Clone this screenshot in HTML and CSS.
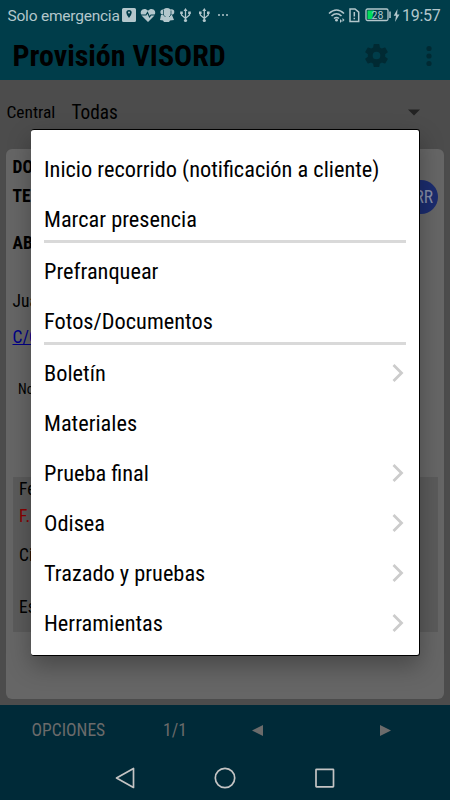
FILE: index.html
```html
<!DOCTYPE html>
<html lang="es">
<head>
<meta charset="utf-8">
<title>Provisión VISORD</title>
<link rel="stylesheet" href="styles.css">
</head>
<body>
<div class="screen">
  <header class="top">
    <div class="status">
      <span class="carrier">Solo emergencia</span>
      <svg class="status-icons" width="112" height="20" viewBox="0 0 112 20" fill="#b3c7cc">
        <path fill-rule="evenodd" d="M3.5 3h11q1.500 0 1.500 1.500v11q0 1.500-1.500 1.500h-11q-1.500 0-1.500-1.500v-11q0-1.500 1.500-1.500zM9 5a2.700 2.700 0 0 0-2.700 2.700q0 1.800 2.700 5.300q2.700-3.500 2.700-5.300A2.700 2.700 0 0 0 9 5z"/><circle cx="9" cy="7.500" r="1"/>
        <path d="M28 17l-6-6C18 5.500 24.500 1.500 28 5.800C31.500 1.500 38 5.500 34 11z"/><path d="M21 10h5l1.500-2.500 2 4.500 1.500-2h4" fill="none" stroke="#003d4a" stroke-width="1.100"/>
        <circle cx="43" cy="7" r="2.600"/><circle cx="51.500" cy="7" r="2.800"/><circle cx="47" cy="7" r="4"/><path d="M40 15l1-5h11l2 5-4 .5-1 1.500h-5l-1-1.500z"/><path d="M43.500 5v5l2 2M51 5.500v4.500l-2 2" fill="none" stroke="#003d4a" stroke-width=".7"/>
        <g id="usb"><path d="M65.500 5v11M61.500 7.500V10l4 3.500L69.500 10V7.500" fill="none" stroke="#b3c7cc" stroke-width="1.300"/><path d="M63.500 6l2-3 2 3zM60.200 6.500h2.600v2.500h-2.600zM68.200 6.500h2.600v2.500h-2.600z"/><circle cx="65.500" cy="15.500" r="1.600"/></g>
        <use href="#usb" x="18.800"/>
        <circle cx="99" cy="10" r="1"/><circle cx="103" cy="10" r="1"/><circle cx="107" cy="10" r="1"/>
      </svg>
      <svg class="signal" width="76" height="20" viewBox="0 0 76 20" fill="none" stroke="#b3c7cc">
        <path d="M1 8.500q7.500-7 15 0M3.500 11q5-4.500 10 0M6 13.500q2.500-2 5 0" stroke-width="1.600"/><circle cx="8.500" cy="15.200" r="1.400" fill="#b3c7cc" stroke="none"/><path d="M12 14v4l2-2zM14.500 13v4l2-2z" fill="#b3c7cc" stroke="none"/>
        <path d="M22 4h5l3.700 3.200V16.500H22z" stroke-width="1.500"/><path d="M26.300 7v4.500M26.300 12.700v1.600" stroke-width="1.500"/>
        <rect x="38" y="4" width="22" height="11.500" rx="1.500" stroke-width="1.300"/><path d="M39.500 5.500H46l-2 8.500h-4.500z" fill="#00dc5a" stroke="none"/><path d="M62 6.500v6.500" stroke-width="1.500"/>
        <text class="battery" x="43.500" y="13.800">28</text>
        <path d="M69.500 4l-3.800 6.800h2.300L67 17l4.500-7.500h-2.400z" fill="#b3c7cc" stroke="none"/>
      </svg>
      <span class="clock">19:57</span>
    </div>
    <div class="appbar">
      <h1 class="title">Provisión VISORD</h1>
      <svg class="gear" width="29" height="29" viewBox="0 0 24 24"><path fill="#002a33" d="M19.140 12.940c.04-.3.06-.61.06-.94 0-.32-.02-.64-.07-.94l2.030-1.580c.18-.14.23-.41.12-.61l-1.920-3.320c-.12-.22-.37-.29-.59-.22l-2.390.96c-.5-.38-1.030-.7-1.620-.94l-.36-2.540c-.04-.24-.24-.41-.48-.41h-3.840c-.24 0-.43.17-.47.41l-.36 2.540c-.59.24-1.130.57-1.620.94l-2.390-.96c-.22-.08-.47 0-.59.22L2.740 8.870c-.12.21-.08.47.12.61l2.030 1.580c-.05.3-.09.63-.09.94s.02.64.07.94l-2.030 1.580c-.18.14-.23.41-.12.61l1.920 3.320c.12.22.37.29.59.22l2.390-.96c.5.38 1.030.7 1.620.94l.36 2.540c.05.24.24.41.48.41h3.840c.24 0 .44-.17.47-.41l.36-2.540c.59-.24 1.130-.56 1.620-.94l2.390.96c.22.08.47 0 .59-.22l1.920-3.320c.12-.22.07-.47-.12-.61zM12 15.200a3.200 3.200 0 1 1 0-6.400 3.200 3.200 0 0 1 0 6.400z"/></svg>
      <svg class="more" width="6" height="22" viewBox="0 0 6 22" fill="#002a33"><circle cx="3" cy="3.500" r="2.600"/><circle cx="3" cy="11" r="2.600"/><circle cx="3" cy="18.500" r="2.600"/></svg>
    </div>
  </header>
  <main class="content">
    <div class="filter">
      <span class="filter-label">Central</span>
      <span class="filter-value">Todas</span>
      <svg class="caret" width="12" height="7" viewBox="0 0 12 7"><path d="M0 .5h12L6 6.500z" fill="#222"/></svg>
    </div>
    <section class="card">
      <div class="line bold">DO</div>
      <div class="line bold with-badge"><span>TE</span><span class="badge">RR</span></div>
      <div class="line bold ab">AB</div>
      <div class="line name">Jua</div>
      <div class="line address"><a class="link">C/C</a></div>
      <div class="line note">No</div>
      <div class="panel">
        <div class="line fe">Fe</div>
        <div class="line red">F.</div>
        <div class="line ci">Ci</div>
        <div class="line es">Es</div>
      </div>
    </section>
  </main>
  <footer class="bottom">
    <div class="actions">
      <span class="action options">OPCIONES</span>
      <span class="action pages">1/1</span>
      <svg class="prev" width="11" height="11" viewBox="0 0 11 11"><path d="M0 5.500L11 0v11z" fill="#6b6b6b"/></svg>
      <svg class="next" width="11" height="11" viewBox="0 0 11 11"><path d="M11 5.500L0 0v11z" fill="#6b6b6b"/></svg>
    </div>
    <nav class="nav">
      <svg width="220" height="24" viewBox="0 0 220 24" fill="none" stroke="#c4c4c4" stroke-width="1.700" stroke-linejoin="round"><path d="M1.500 12L18.500 2.500v19z"/><circle cx="110" cy="12" r="9.700"/><rect x="201" y="3.300" width="17.500" height="17.500" rx=".5"/></svg>
    </nav>
  </footer>
  <div class="dialog">
    <div class="item"><span>Inicio recorrido (notificación a cliente)</span></div>
    <div class="item"><span>Marcar presencia</span></div>
    <hr class="divider">
    <div class="item"><span>Prefranquear</span></div>
    <div class="item"><span>Fotos/Documentos</span></div>
    <hr class="divider">
    <div class="item"><span>Boletín</span><svg class="chev" viewBox="0 0 12 18"><path d="M1.500 1l8 8-8 8"/></svg></div>
    <div class="item"><span>Materiales</span></div>
    <div class="item"><span>Prueba final</span><svg class="chev" viewBox="0 0 12 18"><path d="M1.500 1l8 8-8 8"/></svg></div>
    <div class="item"><span>Odisea</span><svg class="chev" viewBox="0 0 12 18"><path d="M1.500 1l8 8-8 8"/></svg></div>
    <div class="item"><span>Trazado y pruebas</span><svg class="chev" viewBox="0 0 12 18"><path d="M1.500 1l8 8-8 8"/></svg></div>
    <div class="item"><span>Herramientas</span><svg class="chev" viewBox="0 0 12 18"><path d="M1.500 1l8 8-8 8"/></svg></div>
  </div>
</div>
</body>
</html>
```
FILE: styles.css
```css
* { box-sizing: border-box; }
body { margin: 0; font-family: "Roboto Condensed", Roboto, sans-serif; font-stretch: 75%; font-weight: 400; color: #000; }
.screen { position: relative; width: 450px; height: 800px; overflow: hidden; display: flex; flex-direction: column; background: #4c4c4c; }
.top { height: 80px; background: #003d4a; }
.status { height: 31px; display: flex; align-items: center; padding-left: 7.500px; font-family: Roboto, sans-serif; font-stretch: 100%; color: #b3c7cc; }
.carrier { font-size: 15.500px; width: 112.500px; white-space: nowrap; letter-spacing: -.22px; }
.status-icons { margin-top: -1px; }
.signal { margin-left: 96px; margin-top: -1px; }
.battery { font: 10.500px Roboto, sans-serif; fill: #b3c7cc; stroke: none; }
.clock { font-size: 16px; margin-left: -2px; letter-spacing: -.25px; }
.appbar { height: 49px; display: flex; align-items: center; padding: 0 18px 0 12.500px; }
.title { margin: 0; font-size: 30px; font-weight: 700; line-height: 49px; white-space: nowrap; }
.gear { margin-left: auto; }
.more { margin-left: 35.500px; }
.content { flex: 1; display: flex; flex-direction: column; padding: 0 6px; }
.filter { height: 69px; display: flex; align-items: center; padding: 0 24px 5px .5px; }
.filter-label { font-size: 17.400px; width: 65px; }
.filter-value { font-size: 19.300px; }
.caret { margin-left: auto; }
.card { height: 550px; border-radius: 6px; background: #666; padding: 4px 6px 4px 6.500px; }
.line { font-size: 17.500px; line-height: 29px; height: 29px; white-space: nowrap; }
.bold { font-weight: 700; }
.with-badge { display: flex; justify-content: space-between; align-items: center; }
.badge { width: 46px; height: 34px; flex: none; border-radius: 17px; background: #1b2c6e; color: #858da6; font-weight: 400; line-height: 34px; text-align: right; padding-right: 5px; }
.ab { margin-top: 17.500px; }
.name { margin-top: 29px; }
.address { margin-top: 7.500px; }
.link { color: #000087; text-decoration: underline; }
.note { margin-top: 22.500px; padding-left: 5.500px; font-size: 14px; }
.panel { margin-top: 73.500px; height: 155px; background: #5b5b5b; padding-left: 6.500px; display: flex; flex-direction: column; }
.fe { margin-top: -2px; }
.red { color: #8b0000; margin-top: -2.500px; }
.ci { margin-top: 10px; }
.es { margin-top: 23px; }
.bottom { height: 95px; background: #002a38; }
.actions { height: 50px; display: flex; align-items: center; color: #6b6b6b; font-size: 17.500px; padding-left: 31.500px; }
.options { width: 131.500px; }
.pages { width: 89px; }
.next { margin-left: 117px; }
.nav { display: flex; justify-content: center; padding-top: 10.500px; }
.dialog { position: absolute; left: 31px; top: 129px; width: 389px; height: 527px; padding: 14px 13px 0; background: #fff; border: solid #000; border-width: 1px 1px 1px 0; border-radius: 3px; box-shadow: 0 10px 24px rgba(0,0,0,.3); }
.item { height: 50px; display: flex; align-items: center; justify-content: space-between; font-size: 22.350px; line-height: 26px; padding-bottom: 1px; white-space: nowrap; }
.divider { margin: -4px 0 3.800px; border: 0; height: 2.700px; background: #d9d9d9; }
.chev { width: 12px; height: 18px; margin-right: 2.500px; margin-top: -1px; fill: none; stroke: #ccc; stroke-width: 2.800; }
```
